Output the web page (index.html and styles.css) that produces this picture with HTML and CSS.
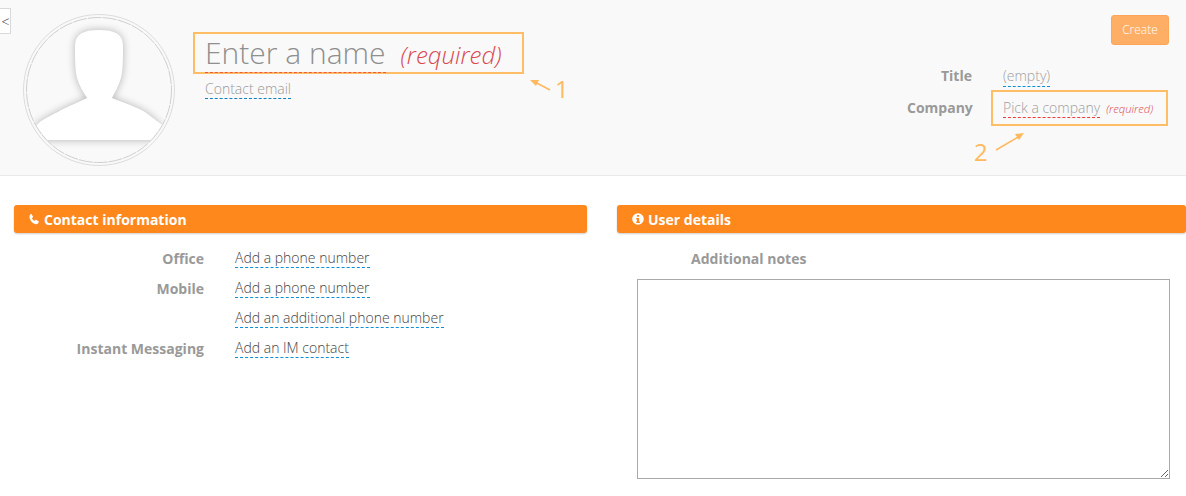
FILE: index.html
```html
<!DOCTYPE html>
<html lang="en">
<head>
<meta charset="utf-8">
<title>New contact</title>
<link rel="stylesheet" href="styles.css">
</head>
<body>
<button class="collapse">&lt;</button>
<header class="top">
  <div class="avatar">
    <svg viewBox="0 0 152 152" width="152" height="152">
      <defs>
        <filter id="soft" x="-20%" y="-20%" width="140%" height="140%"><feGaussianBlur stdDeviation="4"/></filter>
        <clipPath id="disc"><circle cx="76" cy="76" r="72"/></clipPath>
      </defs>
      <circle cx="76" cy="76" r="75.5" fill="#f9f9f9" stroke="#dcdcdc"/>
      <circle cx="76" cy="76" r="72.5" fill="#f9f9f9" stroke="#cfcfcf" stroke-dasharray="14 1"/>
      <g clip-path="url(#disc)">
        <path d="M52 32C52 20 60 16 76 16C92 16 100 20 100 32C100 46 100 56 98 64C96 71 92 78 89 84C104 90 118 94 126 101C131 105 137 110 141 116L139 126H14L12 113C18 105 28 102 38 96C46 92 56 88 64 84C60 78 56 71 54 64C52 56 52 44 52 32Z" fill="#000" opacity=".28" filter="url(#soft)"/>
        <path d="M52 32C52 20 60 16 76 16C92 16 100 20 100 32C100 46 100 56 98 64C96 71 92 78 89 84C104 90 118 94 126 101C131 105 135 108 141 112L130 126H24L12 113C18 105 28 102 38 96C46 92 56 88 64 84C60 78 56 71 54 64C52 56 52 44 52 32Z" fill="#fff"/>
      </g>
    </svg>
  </div>
  <div class="identity">
    <div class="name-line"><span class="name">Enter a name</span><em class="name-req">(required)</em></div>
    <div class="email-line"><span class="email">Contact email</span></div>
  </div>
  <div class="side">
    <button class="create">Create</button>
    <div class="side-row"><span class="side-label">Title</span><span class="side-val dash-blue">(empty)</span></div>
    <div class="side-row"><span class="side-label">Company</span><span class="side-val dash-red">Pick a company</span><em class="side-req">(required)</em></div>
  </div>
</header>
<main class="content">
  <section class="panel">
    <h2 class="bar">
      <svg class="bar-icon" viewBox="0 0 12 12" width="11" height="12"><path d="M2.7.6 4.300 3.300c.2.300.1.600-.1.800l-1 1c.6 1.300 1.500 2.300 2.900 2.900l1-1c.2-.2.500-.3.800-.1l2.500 1.600c.3.200.4.500.2.800-.4 1-1.200 2.300-2.400 2.300C4 11.600.5 7.500.5 3.300.5 2.100 1.300 1.100 2 .6c.3-.2.5-.2.700 0Z" fill="#fff"/></svg>
      Contact information
    </h2>
    <div class="fields">
      <span class="label">Office</span><span class="value"><a class="link">Add a phone number</a></span>
      <span class="label">Mobile</span><span class="value"><a class="link">Add a phone number</a></span>
      <span class="label"></span><span class="value"><a class="link">Add an additional phone number</a></span>
      <span class="label">Instant Messaging</span><span class="value"><a class="link">Add an IM contact</a></span>
    </div>
  </section>
  <section class="panel panel-right">
    <h2 class="bar">
      <svg class="bar-icon" viewBox="0 0 12 12" width="12" height="12"><path fill-rule="evenodd" d="M6 .2a5.800 5.800 0 1 1 0 11.600A5.800 5.800 0 0 1 6 .2ZM4.900 1.900h2.200v1.900H4.900ZM4.200 4.900h2.900v3.700h.8v1.500H4.200V8.600h.8V6.400h-.8Z" fill="#fff"/></svg>
      User details
    </h2>
    <div class="notes-label">Additional notes</div>
    <textarea class="notes"></textarea>
  </section>
</main>
<div class="mark mark-name"></div>
<div class="mark mark-company"></div>
<svg class="arrows" width="1186" height="496" viewBox="0 0 1186 496">
  <g stroke="#ffb95e" stroke-width="1.600" fill="none">
    <path d="M550 90 533 81"/>
    <path d="M996 150 1020 136"/>
  </g>
  <path d="M530 80 539 80 536 86Z" fill="#ffb95e"/>
  <path d="M1024 133 1015 134 1019 140Z" fill="#ffb95e"/>
</svg>
<span class="num num-1">1</span>
<span class="num num-2">2</span>
</body>
</html>
```
FILE: styles.css
```css
* { box-sizing: border-box; }
html, body { margin: 0; padding: 0; }
body {
  width: 1186px;
  height: 496px;
  overflow: hidden;
  position: relative;
  background: #fff;
  font-family: "Open Sans", sans-serif;
  font-size: 14px;
  color: #4c4c4c;
}
.collapse {
  position: absolute;
  left: -1px;
  top: 8px;
  width: 12px;
  height: 26px;
  padding: 0 0 0 1px;
  background: #fff;
  border: 1px solid #d9d9d9;
  font: 300 14px "Open Sans", sans-serif;
  color: #444;
}
.top {
  height: 176px;
  background: #f9f9f9;
  border-bottom: 1px solid #eaeaea;
  display: flex;
  padding: 14px 17px 0 23px;
}
.avatar { width: 152px; height: 152px; flex: none; }
.avatar svg { display: block; }
.identity { margin-left: 30px; flex: 1; padding-top: 18px; }
.name-line { display: flex; align-items: baseline; height: 41px; line-height: 41px; }
.name {
  position: relative;
  z-index: 1;
  font-weight: 300;
  font-size: 30px;
  color: #8f8f8f;
  border-bottom: 1px dashed #f0583f;
  line-height: 41px;
  height: 41px;
}
.name-req {
  font-weight: 300;
  font-size: 24px;
  color: #d9474f;
  margin-left: 15px;
}
.email-line { margin-top: 6px; }
.email {
  display: inline-block;
  font-weight: 300;
  font-size: 14px;
  line-height: 19px;
  color: #999;
  border-bottom: 1px dashed #0f7fbf;
  height: 20px;
}
.side { width: 262px; flex: none; display: flex; flex-direction: column; }
.create {
  align-self: flex-end;
  margin: 1px 0 0;
  width: 58px;
  height: 30px;
  background: #ffae66;
  border: 1px solid #fda55a;
  border-radius: 3px;
  color: #fff;
  font: 300 12px "Open Sans", sans-serif;
  padding: 0 0 2px;
}
.side-row { display: flex; align-items: baseline; height: 35px; }
.create + .side-row { margin-top: 21px; height: 32px; }
.side-label {
  width: 65px;
  text-align: right;
  font-weight: 700;
  color: #999;
  margin-right: 31px;
  white-space: nowrap;
}
.side-val {
  font-weight: 300;
  color: #a0a0a0;
  line-height: 19px;
  height: 21px;
  display: inline-block;
}
.dash-blue { border-bottom: 1px dashed #0b8fd8; }
.dash-red { border-bottom: 1px dashed #f03a3a; height: 20px; }
.side-req {
  font-weight: 300;
  font-size: 11.200px;
  color: #d9474f;
  margin-left: 6px;
}
.content { display: flex; padding: 29px 0 0 14px; }
.panel { width: 573px; flex: none; }
.panel-right { width: 569px; margin-left: 30px; }
.bar {
  margin: 0;
  height: 28px;
  background: #ff881c;
  border-radius: 3px;
  box-shadow: 0 1px 2px rgba(0,0,0,.2);
  color: #fff;
  font-size: 14px;
  font-weight: 700;
  padding: 0 0 0 15px;
  display: flex;
  align-items: center;
  gap: 4px;
}
.bar-icon { flex: none; }
.fields {
  margin-top: 11px;
  display: grid;
  grid-template-columns: 190px 1fr;
  column-gap: 31px;
  grid-auto-rows: 30px;
}
.label { text-align: right; font-weight: 700; color: #999; line-height: 30px; }
.value { line-height: 30px; }
.link {
  display: inline-block;
  vertical-align: 1px;
  font-weight: 300;
  color: #444;
  line-height: 19px;
  height: 20px;
  border-bottom: 1px dashed #0b8fd8;
}
.notes-label {
  margin: 16px 0 0 74px;
  font-weight: 700;
  color: #999;
  line-height: 20px;
}
.notes {
  display: block;
  margin: 10px 0 0 20px;
  width: 533px;
  height: 200px;
  border: 1px solid #a9a9a9;
  background: #fff;
  padding: 2px;
}
.mark {
  position: absolute;
  border: 2px solid #ffbd66;
  pointer-events: none;
}
.mark-name { left: 193px; top: 32px; width: 331px; height: 42px; }
.mark-company { left: 991px; top: 90px; width: 177px; height: 36px; }
.arrows { position: absolute; left: 0; top: 0; pointer-events: none; }
.num {
  position: absolute;
  font-size: 24px;
  font-weight: 400;
  color: #ffb95e;
  line-height: 30px;
}
.num-1 { left: 555px; top: 74px; }
.num-2 { left: 974px; top: 137px; }
```
